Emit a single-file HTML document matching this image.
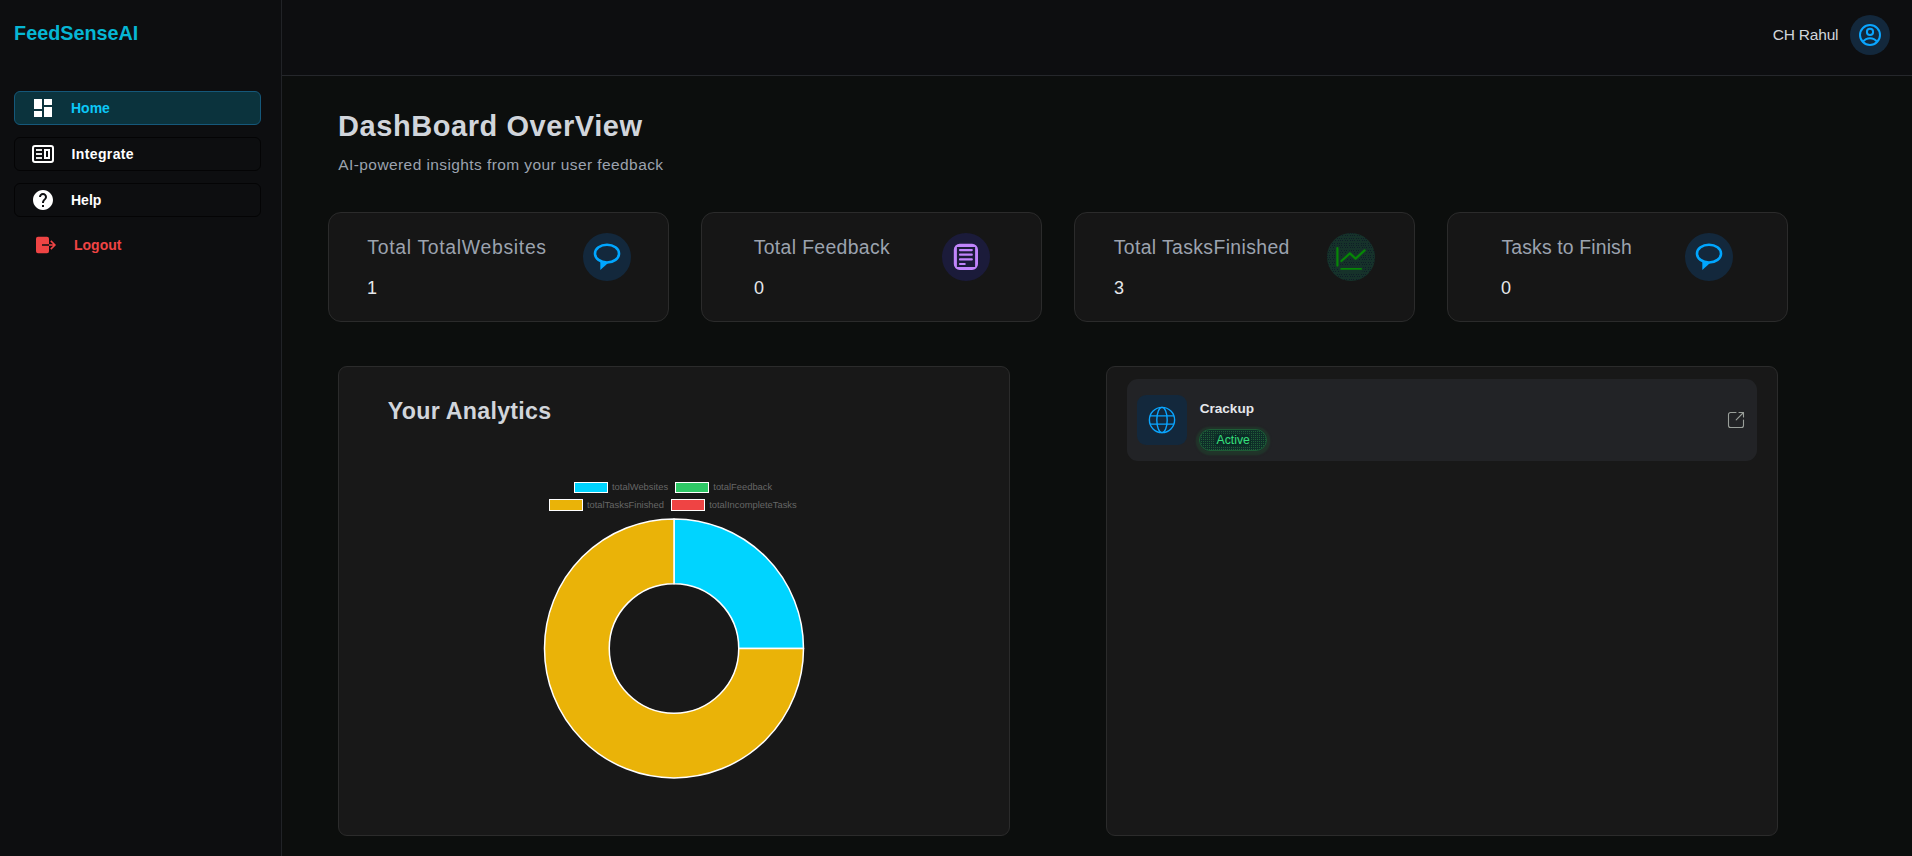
<!DOCTYPE html>
<html>
<head>
<meta charset="utf-8">
<title>FeedSenseAI</title>
<style>
*{box-sizing:border-box;margin:0;padding:0}
html,body{width:1912px;height:856px;overflow:hidden;background:#0c0e0d;font-family:"Liberation Sans",sans-serif;}
.abs{position:absolute}
.t{position:absolute;white-space:nowrap;line-height:1}
#sidebar{position:absolute;left:0;top:0;width:282px;height:856px;background:#0d0e10;border-right:1px solid #212327}
#header{position:absolute;left:282px;top:0;width:1630px;height:76px;background:#0d0e10;border-bottom:1px solid #25272b}
.nav{position:absolute;left:14px;width:247px;height:34px;border-radius:6px;border:1px solid #040405;background:#0d0e10}
.nav.active{background:#0b333d;border-color:#15587a}
.card{position:absolute;top:212px;width:341px;height:110px;border-radius:13px;background:#161616;border:1px solid #2b2b2b}
.panel{position:absolute;top:366px;width:672px;height:470px;border-radius:9px;background:#181818;border:1px solid #2b2b2b}
.circ{position:absolute;width:48px;height:48px;border-radius:50%;top:233px}
.ct{font-size:20px;color:#9ca3af;top:237.6px}
.cv{font-size:18px;color:#e5e7eb;top:279px}
.lg{position:absolute;border:1.6px solid #fff;height:11.5px;width:34px}
.lt{font-size:9.4px;color:#666}
</style>
</head>
<body>
<svg width="0" height="0" style="position:absolute"><defs>
<pattern id="dz" width="12" height="12" patternUnits="userSpaceOnUse"><g fill="#0d1826"><rect x="0" y="0" width="1" height="1"/><rect x="2" y="0" width="1" height="1"/><rect x="5" y="0" width="1" height="1"/><rect x="7" y="0" width="1" height="1"/><rect x="10" y="0" width="1" height="1"/><rect x="1" y="2" width="1" height="1"/><rect x="3" y="2" width="1" height="1"/><rect x="6" y="2" width="1" height="1"/><rect x="8" y="2" width="1" height="1"/><rect x="11" y="2" width="1" height="1"/><rect x="0" y="5" width="1" height="1"/><rect x="2" y="5" width="1" height="1"/><rect x="5" y="5" width="1" height="1"/><rect x="7" y="5" width="1" height="1"/><rect x="10" y="5" width="1" height="1"/><rect x="1" y="7" width="1" height="1"/><rect x="3" y="7" width="1" height="1"/><rect x="6" y="7" width="1" height="1"/><rect x="8" y="7" width="1" height="1"/><rect x="11" y="7" width="1" height="1"/><rect x="0" y="10" width="1" height="1"/><rect x="2" y="10" width="1" height="1"/><rect x="5" y="10" width="1" height="1"/><rect x="7" y="10" width="1" height="1"/><rect x="10" y="10" width="1" height="1"/></g></pattern>
<pattern id="dg" width="2" height="2" patternUnits="userSpaceOnUse"><rect x="0" y="0" width="1" height="1" fill="#1f6038"/></pattern>
</defs></svg>
<div id="sidebar"></div>
<div id="header"></div>

<!-- sidebar -->
<div class="t" id="logo" style="left:14.1px;top:24px;font-size:19.8px;font-weight:bold;color:#06b6d4;letter-spacing:0.0px">FeedSenseAI</div>

<div class="nav active" style="top:91px"></div>
<svg class="abs" style="left:31px;top:96px" width="24" height="24" viewBox="0 0 24 24"><path fill="#fff" d="M3 13h8V3H3v10zm0 8h8v-6H3v6zm10 0h8V11h-8v10zm0-18v6h8V3h-8z"/></svg>
<div class="t" id="home" style="left:71px;top:101px;font-size:14px;font-weight:bold;color:#0cc8f8">Home</div>

<div class="nav" style="top:137px"></div>
<svg class="abs" style="left:31px;top:142px" width="24" height="24" viewBox="0 0 24 24"><rect x="2" y="4" width="20" height="16" rx="2" fill="none" stroke="#fff" stroke-width="2"/><rect x="5" y="7.1" width="6" height="1.8" fill="#fff"/><rect x="5" y="11.1" width="6" height="1.8" fill="#fff"/><rect x="5" y="15.1" width="6" height="1.8" fill="#fff"/><rect x="14" y="8" width="4" height="8" fill="none" stroke="#fff" stroke-width="2"/></svg>
<div class="t" id="integ" style="letter-spacing:0.36px;left:71.6px;top:147px;font-size:14px;font-weight:bold;color:#fff">Integrate</div>

<div class="nav" style="top:183px"></div>
<svg class="abs" style="left:31px;top:188px" width="24" height="24" viewBox="0 0 24 24"><path fill="#fff" d="M12 2C6.48 2 2 6.48 2 12s4.48 10 10 10 10-4.48 10-10S17.52 2 12 2zm1 17h-2v-2h2v2zm2.07-7.75l-.9.92C13.45 12.9 13 13.5 13 15h-2v-.5c0-1.1.45-2.1 1.17-2.83l1.24-1.26c.37-.36.59-.86.59-1.41 0-1.1-.9-2-2-2s-2 .9-2 2H8c0-2.21 1.79-4 4-4s4 1.79 4 4c0 .88-.36 1.68-.93 2.25z"/></svg>
<div class="t" id="help" style="left:71px;top:193px;font-size:14px;font-weight:bold;color:#fff">Help</div>

<svg class="abs" style="left:34px;top:233px" width="24" height="24" viewBox="0 0 24 24"><path fill="#ef4444" d="M4 3.8h9a2 2 0 0 1 2 2v5.45H8v1.5h7v5.45a2 2 0 0 1-2 2H4a2 2 0 0 1-2-2V5.8a2 2 0 0 1 2-2z"/><path fill="none" stroke="#ef4444" stroke-width="1.6" d="M15 12h5.8M16.8 7.9l4.1 4.1-4.1 4.1"/></svg>
<div class="t" id="logout" style="left:74px;top:238px;font-size:14px;font-weight:bold;color:#ef4444">Logout</div>

<!-- header -->
<div class="t" id="user" style="left:1772.8px;top:27.3px;font-size:15.5px;color:#d1d5db;letter-spacing:-0.21px">CH Rahul</div>
<div class="abs" style="left:1850px;top:15px;width:40px;height:40px;border-radius:50%;background:#13283c"></div>
<svg class="abs" style="left:1858px;top:23px" width="24" height="24" viewBox="0 0 24 24" fill="none" stroke="#0aa5ff" stroke-width="2"><circle cx="12" cy="12" r="10"/><circle cx="12" cy="8.9" r="3.1"/><path d="M5 18.7A8.75 8.75 0 0 1 19 18.7"/></svg>

<!-- heading -->
<div class="t" id="h1" style="left:338.1px;top:112.0px;font-size:29px;font-weight:bold;color:#d1d5db;letter-spacing:0.56px">DashBoard OverView</div>
<div class="t" id="sub" style="letter-spacing:0.41px;left:338.3px;top:156.5px;font-size:15.5px;color:#9ca3af">AI-powered insights from your user feedback</div>

<!-- cards -->
<div class="card" style="left:328px"></div>
<div class="card" style="left:701px"></div>
<div class="card" style="left:1074px"></div>
<div class="card" style="left:1447px"></div>

<div class="t ct" id="c1" style="letter-spacing:0.69px;left:367.3px;font-size:19.4px">Total TotalWebsites</div>
<div class="t cv" style="left:367px">1</div>
<div class="circ" style="left:583px;background:#13283c"></div>

<div class="t ct" id="c2" style="left:753.7px;font-size:19.4px;letter-spacing:0.35px">Total Feedback</div>
<div class="t cv" style="left:754px">0</div>
<div class="circ" style="left:942px;background:#1b1b3a"></div>

<div class="t ct" id="c3" style="left:1113.7px;font-size:19.4px;letter-spacing:0.38px">Total TasksFinished</div>
<div class="t cv" style="left:1114px">3</div>
<div class="circ" style="left:1327px;background:#16322a"></div>
<svg class="abs" style="left:1327px;top:233px" width="48" height="48"><circle cx="24" cy="24" r="24" fill="url(#dz)" opacity=".8"/><path d="M10.6 15V32.8M14 36.2H34.2M14.4 28L22.9 20.4L28.6 25.6L37.6 17.4" fill="none" stroke="#16322a" stroke-width="5.5" stroke-linecap="round" stroke-linejoin="round"/></svg>

<div class="t ct" id="c4" style="left:1501.5px;font-size:19.4px;letter-spacing:0.14px">Tasks to Finish</div>
<div class="t cv" style="left:1501px">0</div>
<div class="circ" style="left:1685px;background:#13283c"></div>

<!-- panels -->
<div class="panel" style="left:338px"></div>
<div class="panel" style="left:1106px"></div>
<div class="t" id="ya" style="left:387.8px;top:399.7px;font-size:23.2px;font-weight:bold;color:#d1d5db;letter-spacing:0.27px">Your Analytics</div>

<!-- card icons -->
<svg class="abs" style="left:583px;top:233px" width="48" height="48" viewBox="0 0 48 48"><ellipse cx="24" cy="20.6" rx="12" ry="8.9" fill="none" stroke="#00a6ff" stroke-width="2.6"/><path d="M17.3 28.2V37L24.8 30.2Z" fill="#00a6ff"/></svg>
<svg class="abs" style="left:1685px;top:233px" width="48" height="48" viewBox="0 0 48 48"><ellipse cx="24" cy="20.6" rx="12" ry="8.9" fill="none" stroke="#00a6ff" stroke-width="2.6"/><path d="M17.3 28.2V37L24.8 30.2Z" fill="#00a6ff"/></svg>
<svg class="abs" style="left:942px;top:233px" width="48" height="48" viewBox="0 0 48 48"><path fill="#c084fc" fill-rule="evenodd" d="M17.8 10.7h12.2a6 6 0 0 1 6 6v14.4a6 6 0 0 1-6 6H17.8a6 6 0 0 1-6-6V16.7a6 6 0 0 1 6-6zM14.9 14.1V34H33.1V14.1z"/><g stroke="#c084fc" stroke-width="2.2" stroke-linecap="round"><path d="M18 17.1H29.8M18 21.7H29.8M18 26.4H29.8M18 31H22.7"/></g></svg>
<svg class="abs" style="left:1327px;top:233px" width="48" height="48" viewBox="0 0 48 48" fill="none" stroke="#068606" stroke-width="2.2" stroke-linecap="round" stroke-linejoin="round"><path d="M10.4 15.2V32.6M14.4 28L22.9 20.4L28.6 25.6L37.6 17.4"/><path d="M14.2 35.9H34.2" stroke-width="1.7"/></svg>

<!-- chart -->
<svg class="abs" style="left:0;top:0" width="1912" height="856" viewBox="0 0 1912 856"><path d="M674.00 518.90A129.5 129.5 0 0 1 803.50 648.40L738.75 648.40A64.75 64.75 0 0 0 674.00 583.65Z" fill="#00d4ff" stroke="#fff" stroke-width="1.5" stroke-linejoin="round"/><path d="M803.50 648.40A129.5 129.5 0 1 1 674.00 518.90L674.00 583.65A64.75 64.75 0 1 0 738.75 648.40Z" fill="#eab308" stroke="#fff" stroke-width="1.5" stroke-linejoin="round"/></svg>
<div class="lg" style="left:574.3px;top:481.5px;background:#00d4ff"></div><div class="t lt" id="l1" style="left:612px;top:482.2px">totalWebsites</div>
<div class="lg" style="left:675.2px;top:481.5px;background:#2ec866"></div><div class="t lt" id="l2" style="left:713.3px;top:482.2px">totalFeedback</div>
<div class="lg" style="left:549.2px;top:499.2px;background:#eab308"></div><div class="t lt" id="l3" style="left:586.9px;top:499.9px">totalTasksFinished</div>
<div class="lg" style="left:671.2px;top:499.2px;background:#ef4444"></div><div class="t lt" id="l4" style="left:709.2px;top:499.9px">totalIncompleteTasks</div>

<!-- right panel item -->
<div class="abs" style="left:1127px;top:379px;width:630px;height:82px;border-radius:11px;background:#222326"></div>
<div class="abs" style="left:1137px;top:395px;width:50px;height:50px;border-radius:9px;background:#13283c"></div>
<svg class="abs" style="left:1147px;top:405px" width="30" height="30" viewBox="0 0 30 30" fill="none" stroke="#0aa5ff" stroke-width="1.4"><circle cx="15" cy="15" r="12.6"/><ellipse cx="15" cy="15" rx="5.2" ry="12.6"/><path d="M3.2 10.9H26.8M3.2 19.1H26.8"/></svg>
<div class="t" id="crack" style="left:1199.7px;top:402.4px;font-size:13.6px;font-weight:bold;color:#e5e7eb;letter-spacing:-0.02px">Crackup</div>
<div class="abs" style="left:1199px;top:429px;width:68px;height:22px;border-radius:11px;background:#0f2e29;box-shadow:0 1px 1.5px 3.2px #21342a"></div>
<svg class="abs" style="left:1199px;top:429px" width="68" height="22"><rect x="0.5" y="0.5" width="67" height="21" rx="10.5" fill="url(#dg)" stroke="#1e5c36" stroke-width="1"/></svg>
<div class="abs" style="left:1216px;top:434.5px;width:33px;height:10px;background:#0f2e29;box-shadow:0 0 1px 0.5px #0f2e29;border-radius:2px;opacity:.85"></div>
<div class="t" id="active" style="left:1216.6px;top:434px;font-size:12.2px;color:#36e07c;text-shadow:0 0 1.5px #0f2e29,0 0 1.5px #0f2e29,0 0 1.5px #0f2e29,0 0 1.5px #0f2e29;letter-spacing:0.02px">Active</div>
<svg class="abs" style="left:1727px;top:411px" width="18" height="18" viewBox="-1 -1 18 18" fill="none" stroke="#9a9f9a" stroke-width="1.1" stroke-linecap="round" stroke-linejoin="round"><path d="M8 0.5H2.5a2 2 0 0 0-2 2v11a2 2 0 0 0 2 2h11a2 2 0 0 0 2-2V8"/><path d="M8.2 7.8L15.5 0.5M11 0.5H15.5V5"/></svg>

</body>
</html>
